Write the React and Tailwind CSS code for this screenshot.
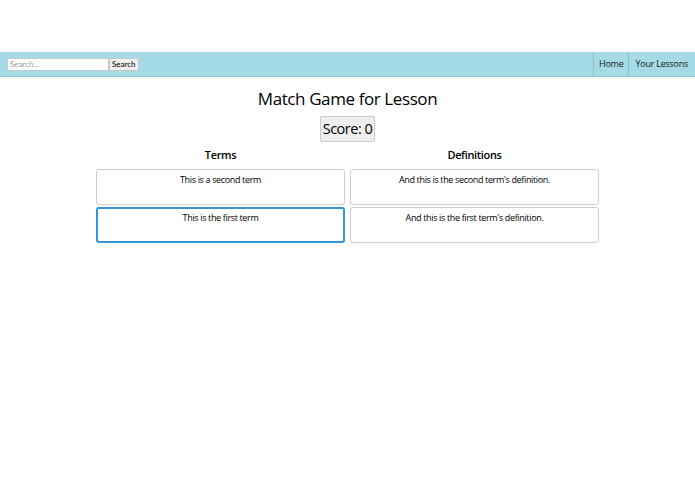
import { useState } from "react";

const terms = [
  { id: 2, text: "This is a second term" },
  { id: 1, text: "This is the first term" },
];

const definitions = [
  { id: 2, text: "And this is the second term's definition." },
  { id: 1, text: "And this is the first term's definition." },
];

const App = () => {
  const [selected, setSelected] = useState(1);

  return (
    <div className="w-full min-h-[494px] bg-white text-black font-['Open_Sans',sans-serif]">
      <div className="h-[52px]"></div>
      {/* navbar */}
      <div className="flex items-stretch justify-between h-[25px] bg-[#a5dbe6] border-b border-[#93c9d4]">
        <div className="flex items-center pl-[7px] font-['Lato',sans-serif]">
          <input
            type="text"
            placeholder="Search..."
            className="w-[102px] h-[13px] px-[2px] bg-white text-[8px] border border-[#c8c8c8] placeholder:text-[#999] outline-none"
          />
          <button className="h-[13px] px-[2px] bg-[#efefef] border border-[#c8c8c8] text-[8px] leading-none text-black">
            Search
          </button>
        </div>
        <div className="flex items-stretch text-[9px] tracking-[-0.25px] text-[#1a1a1a]">
          <a className="flex items-center px-[5px] border-l border-[#86bfca]">Home</a>
          <a className="flex items-center pl-[6px] pr-[7px] border-l border-[#86bfca]">Your Lessons</a>
        </div>
      </div>

      <div className="flex flex-col items-center">
        <h1 className="mt-[9px] text-[17px] tracking-[-0.4px] leading-[26px] font-normal">Match Game for Lesson</h1>
        <div className="mt-[4px] px-[2px] h-[26px] flex items-center bg-[#eeeeee] border border-[#cccccc] rounded-[2px] text-[14.5px] tracking-[-0.5px]">
          Score: 0
        </div>

        <div className="mt-[5px] w-[503px] grid grid-cols-2 gap-x-[5px] tracking-[-0.35px]">
          <div className="flex flex-col gap-[2px]">
            <div className="text-center text-[11px] font-semibold leading-[15px] mb-[5px]">Terms</div>
            {terms.map((t) => (
              <div
                key={t.id}
                onClick={() => setSelected(t.id)}
                className={
                  selected === t.id
                    ? "h-[36px] rounded-[3px] border-[2px] border-[#3496d8] text-center text-[9px] leading-[13px] pt-[2px]"
                    : "h-[36px] rounded-[3px] border border-[#cfcfcf] shadow-[0_0_1px_#ddd] text-center text-[9px] leading-[13px] pt-[3px]"
                }
              >
                {t.text}
              </div>
            ))}
          </div>
          <div className="flex flex-col gap-[2px]">
            <div className="text-center text-[11px] font-semibold leading-[15px] mb-[5px]">Definitions</div>
            {definitions.map((d) => (
              <div
                key={d.id}
                className="h-[36px] rounded-[3px] border border-[#cfcfcf] shadow-[0_0_1px_#ddd] text-center text-[9px] leading-[13px] pt-[3px]"
              >
                {d.text}
              </div>
            ))}
          </div>
        </div>
      </div>
    </div>
  );
};

export default App;
